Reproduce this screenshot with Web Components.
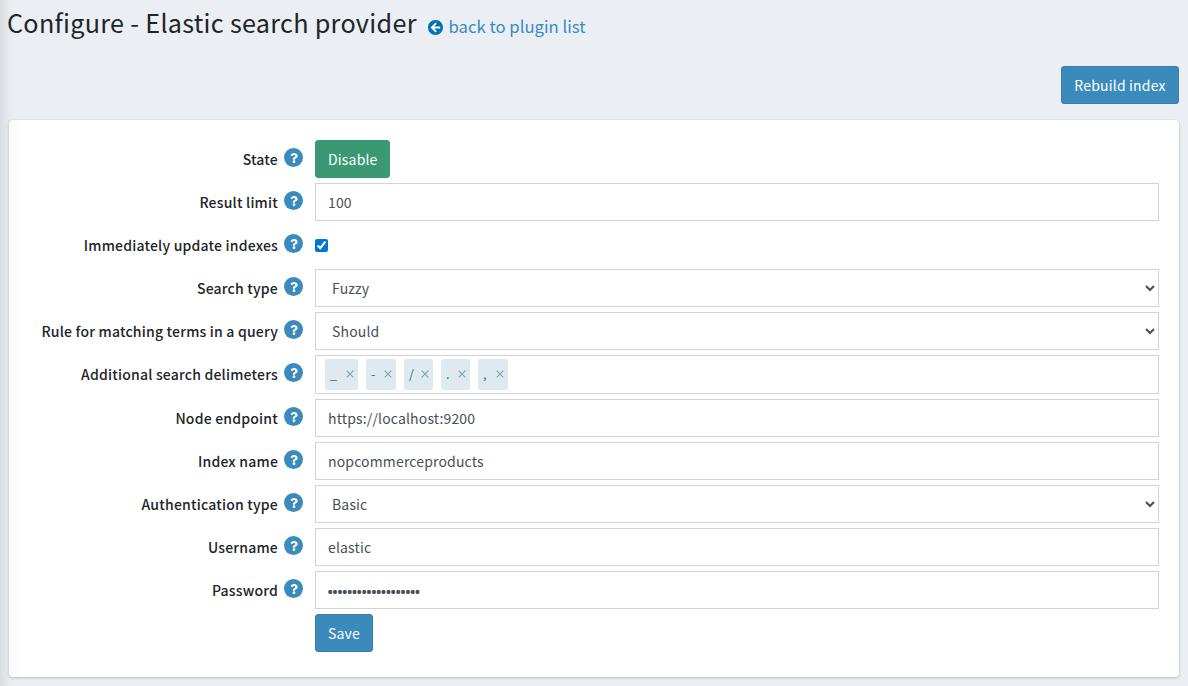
<!DOCTYPE html>
<html lang="en"><head><meta charset="utf-8"><title>Configure - Elastic search provider</title>
<style>
html,body{margin:0;height:100%}
body{background:#ebeef3;color:#212529;font:14px/24px "Noto Sans CJK SC","Noto Sans",sans-serif;overflow:hidden}
</style></head><body>
<plugin-page></plugin-page>
<script>
const define=(name,html,init)=>customElements.define(name,class extends HTMLElement{
  connectedCallback(){
    if(this.shadowRoot)return;
    const t=document.createElement('template');t.innerHTML=html;
    this.attachShadow({mode:'open'}).append(t.content.cloneNode(true));
    if(init)init(this,this.shadowRoot);
  }
});

define('help-mark',`<style>:host{display:flex;width:19px;height:19px;border-radius:50%;background:#3a8bbc;align-items:center;justify-content:center}svg{display:block;width:8px;height:10px;fill:#fff}</style>
<svg viewBox="0 0 384 512"><path d="M202.021 0C122.202 0 70.503 32.703 29.914 91.026c-7.363 10.58-5.093 25.086 5.178 32.874l43.138 32.709c10.373 7.865 25.132 6.026 33.253-4.148 25.049-31.381 43.63-49.449 82.757-49.449 30.764 0 68.816 19.799 68.816 49.631 0 22.552-18.617 34.134-48.993 51.164-35.423 19.86-82.299 44.576-82.299 106.405V320c0 13.255 10.745 24 24 24h72.471c13.255 0 24-10.745 24-24v-5.773c0-42.86 125.268-44.645 125.268-160.627C377.504 66.256 286.902 0 202.021 0zM192 373.459c-38.196 0-69.271 31.075-69.271 69.271 0 38.195 31.075 69.27 69.271 69.27s69.271-31.075 69.271-69.271-31.075-69.27-69.271-69.27z"/></svg>`);

define('action-button',`<style>:host{display:inline-block}button{display:block;box-sizing:border-box;width:100%;height:38px;padding:0 12px;border:1px solid #367fa9;border-radius:3px;background:#3a8bbc;color:#fff;font:inherit;letter-spacing:.18px;line-height:36px;white-space:nowrap}:host([kind=success]) button{background:#3a9972;border-color:#3a9972}</style><button><slot></slot></button>`);

define('text-field',`<style>:host{display:block}input{display:block;box-sizing:border-box;width:100%;height:38px;margin:0;padding:0 12px 1px;border:1px solid #ced4da;background:#fff;color:#495057;font:inherit;letter-spacing:.15px;outline:0}
input[type=password]{font-family:"Noto Sans",sans-serif;font-size:17px;letter-spacing:-1.54px;padding:3px 11px 0}</style><input>`,(h,s)=>{const i=s.querySelector('input');i.type=h.getAttribute('type')||'text';i.value=h.getAttribute('value')});

define('select-field',`<style>:host{display:block}select{display:block;box-sizing:border-box;width:100%;height:38px;margin:0;padding:0 12px 1px;border:1px solid #ced4da;border-radius:0;background:#fff;color:#495057;font:inherit;letter-spacing:.15px;outline:0}</style><select><option></option></select>`,(h,s)=>{s.querySelector('option').textContent=h.getAttribute('value')});

define('check-field',`<style>:host{display:flex;height:38px;align-items:center}input{width:13px;height:13px;margin:0;accent-color:#0075d2}</style><input type="checkbox" checked>`);

define('token-chip',`<style>:host{display:flex;box-sizing:border-box;height:31px;padding:2px 4.5px 0 5px;background:#deeaf0;border-radius:2px;color:#2b6a94;font-size:12.5px;line-height:26px;justify-content:space-between}svg{width:8px;height:8px;margin-top:8.5px;stroke:#7fa3bd;stroke-width:1.2;fill:none}</style><span><slot></slot></span><svg viewBox="0 0 8 8"><path d="M.7.7l6.6 6.6M7.3.7L.7 7.3"/></svg>`);

define('token-field',`<style>:host{display:flex;box-sizing:border-box;height:39px;padding:3px 9px;gap:8px;border:1px solid #ced4da}</style><slot></slot>`);

define('form-row',`<style>:host{display:grid;grid-template-columns:294px 844px;column-gap:12px;margin-bottom:5px}.label{display:flex;height:38px;justify-content:flex-end;gap:6px}.label span{font-weight:500;letter-spacing:.2px;line-height:39px;white-space:nowrap}help-mark{margin-top:8.4px}.label[hidden]{display:block;visibility:hidden}</style>
<div class="label"><span></span><help-mark></help-mark></div><div><slot></slot></div>`,(h,s)=>{const l=h.getAttribute('label');s.querySelector('span').textContent=l||'';if(!l)s.querySelector('.label').hidden=true});

define('settings-card',`<style>:host{display:block;box-sizing:border-box;margin:16px 9px 0;height:557px;padding:20px 0 0;border-radius:4px;background:linear-gradient(90deg,#fafafa,#fff 14px);box-shadow:0 0 1px rgba(0,0,0,.125),0 1px 3px rgba(0,0,0,.2)}</style><slot></slot>`);

define('page-header',`<style>:host{display:flex;height:50px;box-sizing:border-box;padding-left:7px}h1{margin:0;font-weight:400;font-size:25.2px;letter-spacing:.29px;line-height:44px;white-space:nowrap;width:421px}
a{display:flex;color:#3a8bbc;text-decoration:none;font-size:16.7px;line-height:52px;gap:5.5px;white-space:nowrap}svg{width:15px;height:15px;fill:#0073b7;margin-top:20px}</style>
<h1><slot></slot></h1><a href="#"><svg viewBox="8 8 496 496"><circle cx="256" cy="256" r="235" fill="#fff"/><path d="M256 504C119 504 8 393 8 256S119 8 256 8s248 111 248 248-111 248-248 248zm28.9-143.6L209.4 288H392c13.3 0 24-10.7 24-24v-16c0-13.3-10.7-24-24-24H209.4l75.5-72.4c9.7-9.3 9.9-24.8.4-34.3l-11-10.9c-9.4-9.4-24.6-9.4-33.9 0L107.7 239c-9.4 9.4-9.4 24.6 0 33.9l132.7 132.7c9.4 9.4 24.6 9.4 33.9 0l11-10.9c9.5-9.5 9.3-25-.4-34.3z"/></svg><span>back to plugin list</span></a>`);

define('plugin-page',`<style>:host{display:block;height:100%;box-sizing:border-box;background:linear-gradient(90deg,rgba(0,0,0,.08),rgba(0,0,0,.02) 8px,transparent 16px)}.tools{display:flex;justify-content:flex-end;padding:16px 9px 0}</style>
<page-header>Configure - Elastic search provider</page-header>
<div class="tools"><action-button style="width:118px">Rebuild index</action-button></div>
<settings-card>
<form-row label="State"><action-button kind="success" style="width:75px">Disable</action-button></form-row>
<form-row label="Result limit"><text-field value="100"></text-field></form-row>
<form-row label="Immediately update indexes"><check-field></check-field></form-row>
<form-row label="Search type"><select-field value="Fuzzy"></select-field></form-row>
<form-row label="Rule for matching terms in a query"><select-field value="Should"></select-field></form-row>
<form-row label="Additional search delimeters"><token-field><token-chip style="width:33px">_</token-chip><token-chip style="width:30px">-</token-chip><token-chip style="width:29px">/</token-chip><token-chip style="width:29px">.</token-chip><token-chip style="width:30px">,</token-chip></token-field></form-row>
<form-row label="Node endpoint"><text-field value="https://localhost:9200"></text-field></form-row>
<form-row label="Index name"><text-field value="nopcommerceproducts"></text-field></form-row>
<form-row label="Authentication type"><select-field value="Basic"></select-field></form-row>
<form-row label="Username"><text-field value="elastic"></text-field></form-row>
<form-row label="Password"><text-field type="password" value="0000000000000000000"></text-field></form-row>
<form-row><action-button style="width:58px">Save</action-button></form-row>
</settings-card>`);
</script></body></html>
